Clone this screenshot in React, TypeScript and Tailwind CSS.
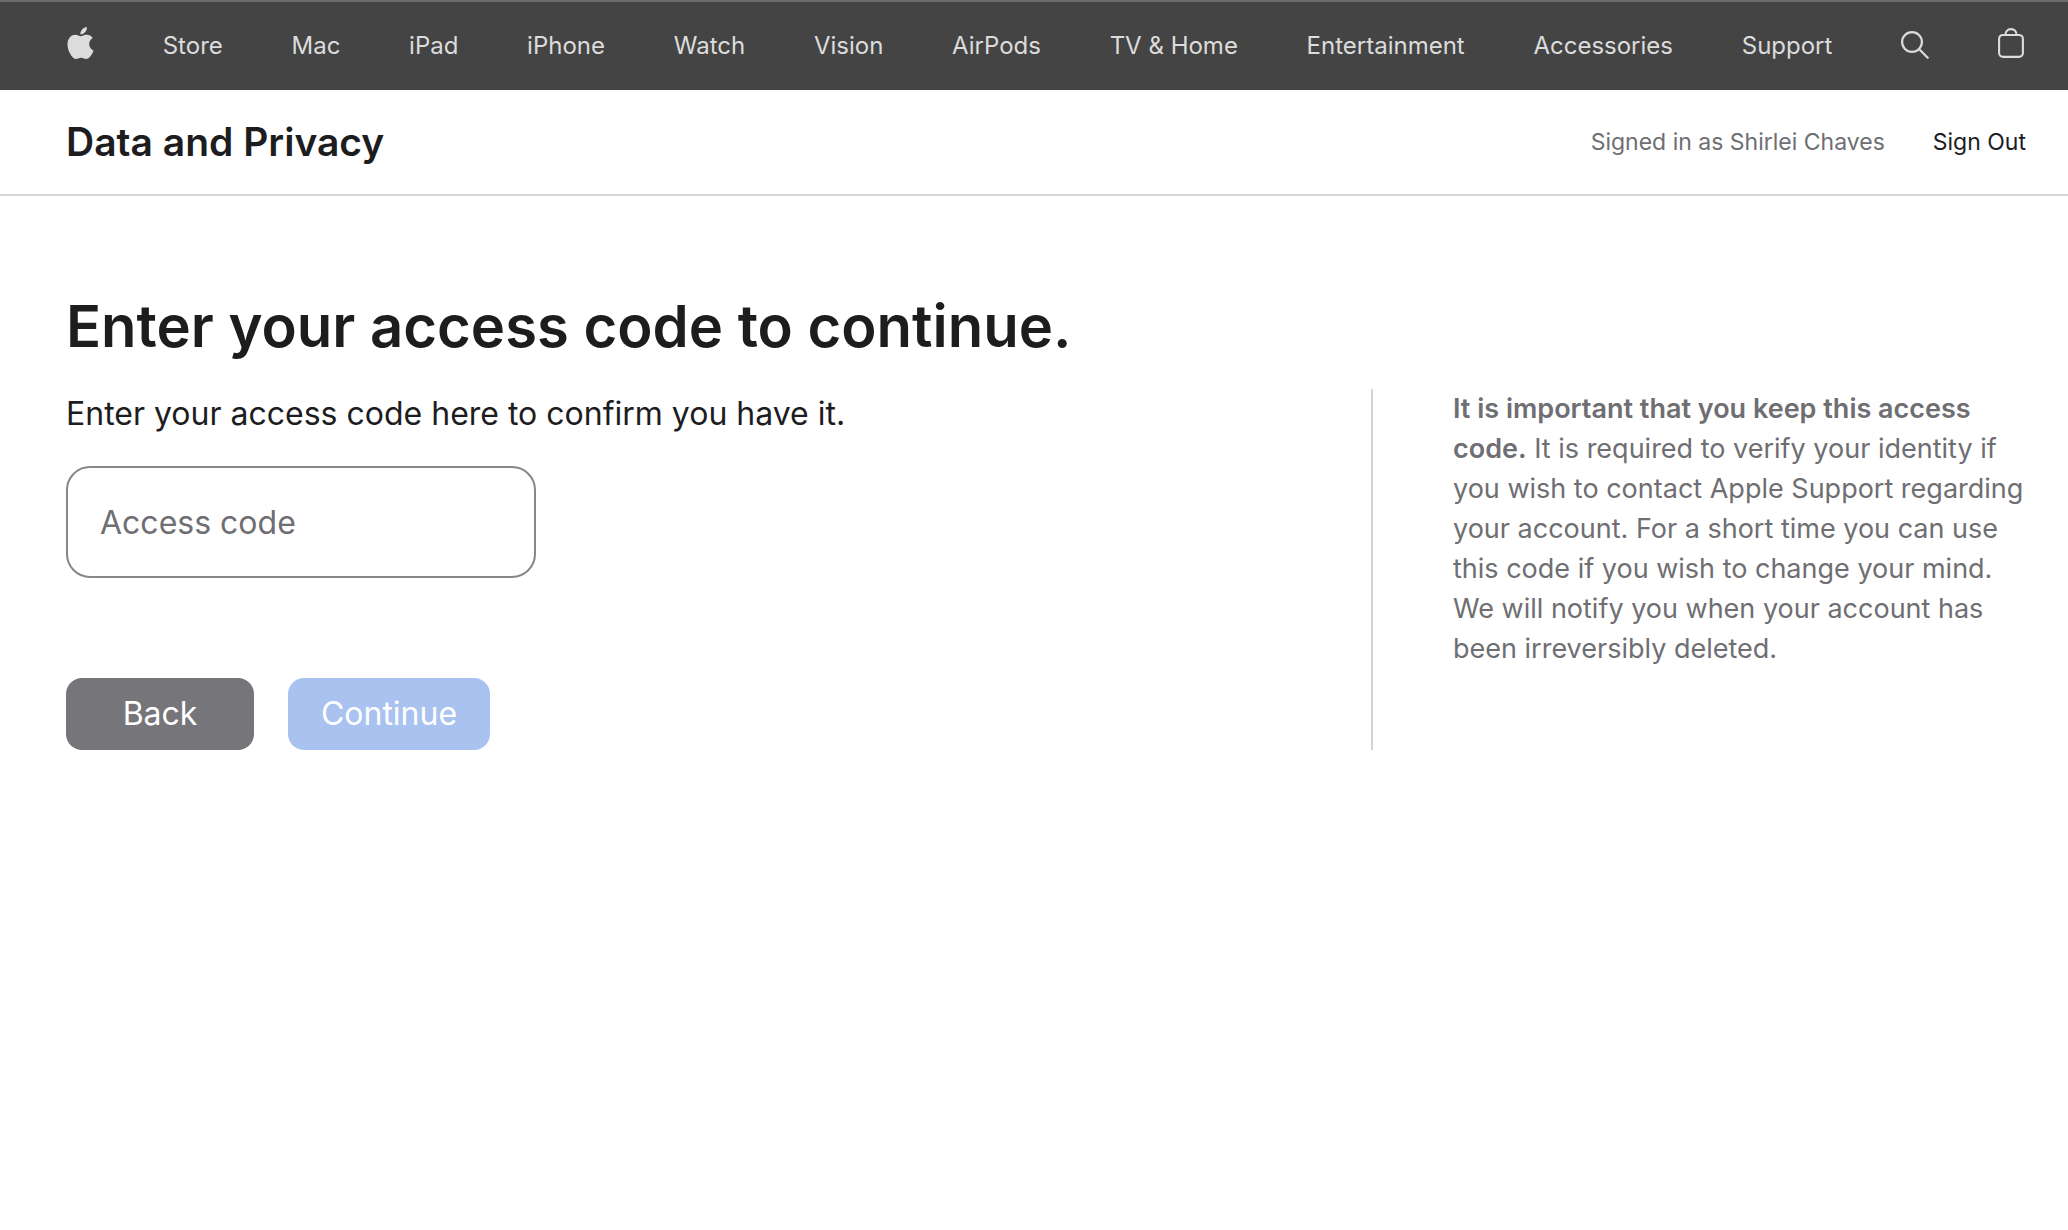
const links = [
  "Store",
  "Mac",
  "iPad",
  "iPhone",
  "Watch",
  "Vision",
  "AirPods",
  "TV & Home",
  "Entertainment",
  "Accessories",
  "Support",
];

function AppleLogo() {
  return (
    <svg width="27" height="32" viewBox="0 0 814 1000" fill="currentColor" aria-hidden="true">
      <path d="M788.1 340.9c-5.800 4.500-108.200 62.200-108.200 190.500 0 148.400 130.300 200.900 134.200 202.200-.6 3.200-20.700 71.900-68.700 141.900-42.800 61.600-87.500 123.100-155.500 123.100s-85.500-39.500-164-39.500c-76.500 0-103.700 40.800-165.900 40.800s-105.600-57-155.500-127C46.700 790.700 0 663 0 541.800c0-194.400 126.400-297.500 250.800-297.500 66.100 0 121.200 43.400 162.700 43.400 39.500 0 101.100-46 176.300-46 28.500 0 130.900 2.600 198.300 99.200zm-234-181.500c31.100-36.900 53.100-88.100 53.100-139.300 0-7.100-.6-14.300-1.900-20.100-50.600 1.900-110.800 33.700-147.100 75.800-28.500 32.400-55.100 83.600-55.100 135.500 0 7.800 1.300 15.600 1.900 18.100 3.200.6 8.400 1.300 13.600 1.300 45.400 0 102.500-30.400 135.500-71.300z" />
    </svg>
  );
}

function SearchIcon() {
  return (
    <svg width="28" height="28" viewBox="0 0 28 28" fill="none" stroke="currentColor" strokeWidth="2.2" strokeLinecap="round" aria-hidden="true">
      <circle cx="11" cy="11" r="9.900" />
      <path d="M18.200 18.200 26.700 26.700" />
    </svg>
  );
}

function BagIcon() {
  return (
    <svg width="26" height="30" viewBox="0 0 26 30" fill="none" stroke="currentColor" strokeWidth="2.1" aria-hidden="true">
      <rect x="1.100" y="7" width="23.800" height="21.900" rx="3.800" />
      <path d="M7.400 7c0-3.300 2.400-5.900 5.600-5.900s5.600 2.600 5.600 5.900" />
    </svg>
  );
}

export default function App() {
  return (
    <div className="min-h-screen bg-white font-['Inter',sans-serif] text-[#1d1d1f]">
      <nav aria-label="Global" className="border-t-2 border-[#6b6b6b] bg-[#444444] text-[#dcdcdc]">
        <ul className="flex h-22 items-center justify-between pr-11 pl-[67px] text-2xl">
          <li>
            <a href="#" aria-label="Apple" className="block pb-1.5">
              <AppleLogo />
            </a>
          </li>
          {links.map((label) => (
            <li key={label}>
              <a href="#" className="whitespace-nowrap">
                {label}
              </a>
            </li>
          ))}
          <li>
            <button type="button" aria-label="Search" className="block pb-0.5">
              <SearchIcon />
            </button>
          </li>
          <li>
            <button type="button" aria-label="Shopping Bag" className="block pb-1.5">
              <BagIcon />
            </button>
          </li>
        </ul>
      </nav>

      <header className="flex h-[106px] items-center justify-between border-b-2 border-[#d6d6d6] pr-[42px] pl-[66px]">
        <h2 className="text-[39px] font-semibold">Data and Privacy</h2>
        <div className="flex items-center gap-12 text-[23px]">
          <span className="text-[#6e6e73]">Signed in as Shirlei Chaves</span>
          <a href="#">Sign Out</a>
        </div>
      </header>

      <main className="pt-24 pr-[42px] pl-[66px]">
        <h1 className="text-[58px] leading-[69px] font-semibold">Enter your access code to continue.</h1>
        <div className="mt-7 flex justify-between">
          <form onSubmit={(e) => e.preventDefault()}>
            <label htmlFor="access-code" className="block text-[32px] leading-[50px]">
              Enter your access code here to confirm you have it.
            </label>
            <input
              id="access-code"
              type="text"
              placeholder="Access code"
              className="mt-[27px] block h-28 w-[470px] rounded-3xl border-2 border-[#86868b] px-8 text-[32px] outline-none placeholder:text-[#6e6e73]"
            />
            <div className="mt-25 flex gap-[34px] text-[32px] text-white">
              <button type="button" className="h-18 w-[188px] rounded-2xl bg-[#76757a]">
                Back
              </button>
              <button type="submit" disabled className="h-18 w-[202px] rounded-2xl bg-[#a9c2f0]">
                Continue
              </button>
            </div>
          </form>
          <aside className="w-[655px] border-l-2 border-[#d2d2d7] pl-20">
            <p className="text-[27px] leading-10 text-[#6e6e73]">
              <strong className="font-semibold">It is important that you keep this access code.</strong> It is required
              to verify your identity if you wish to contact Apple Support regarding your account. For a short time you
              can use this code if you wish to change your mind. We will notify you when your account has been
              irreversibly deleted.
            </p>
          </aside>
        </div>
      </main>
    </div>
  );
}
